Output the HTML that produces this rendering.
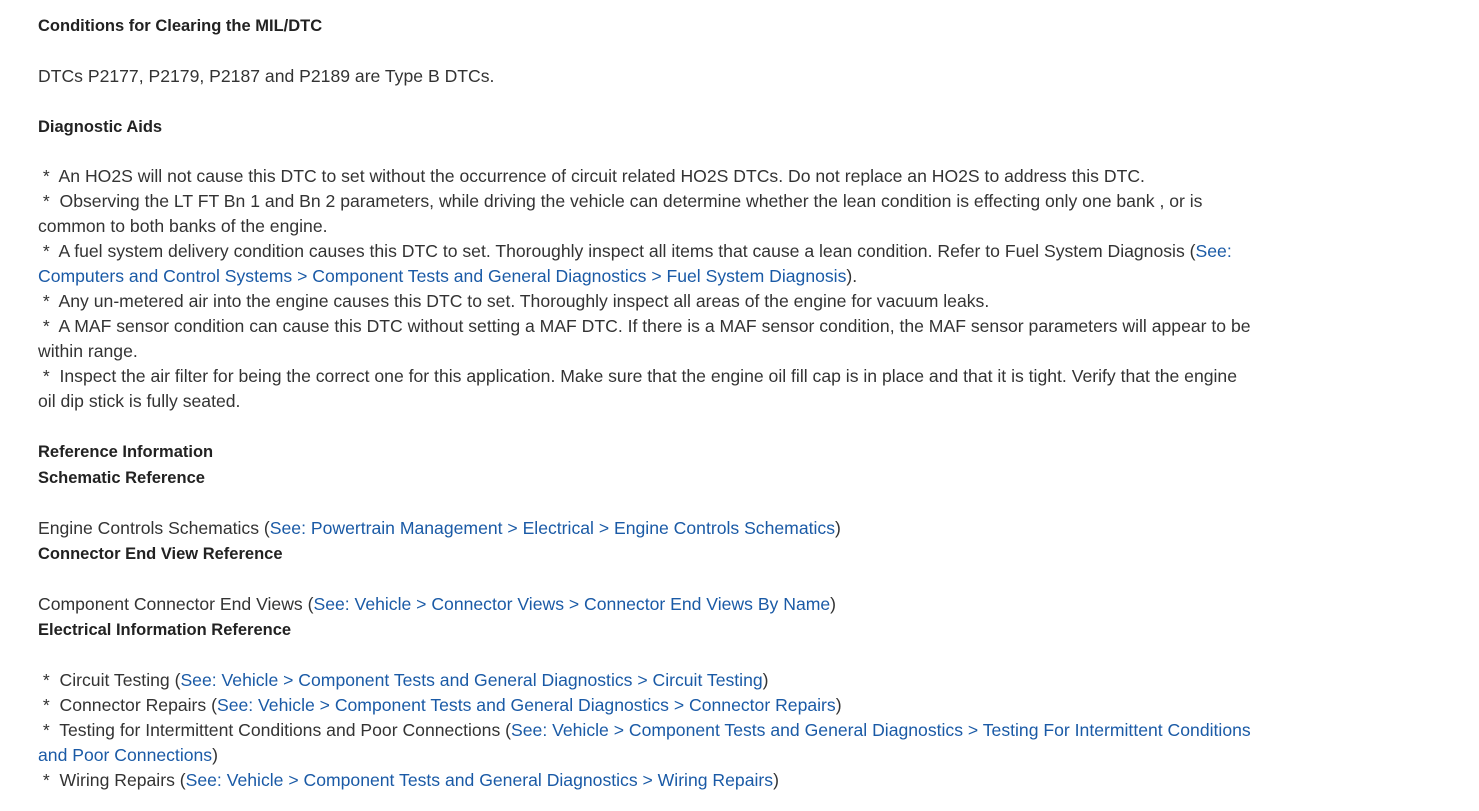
<!DOCTYPE html>
<html><head><meta charset="utf-8"><style>
body{margin:0;background:#fff;width:1479px;height:811px;overflow:hidden;font-family:"Liberation Sans",Arial,sans-serif;font-size:17.6px;color:#333}
.l{position:absolute;left:38px;white-space:nowrap;line-height:20px}
b{font-weight:bold;color:#222;font-size:16.5px}
a{color:#1a5aa6;text-decoration:none}
</style></head><body>
<div class="l" style="top:15px"><b>Conditions for Clearing the MIL/DTC</b></div>
<div class="l" style="top:66px">DTCs P2177, P2179, P2187 and P2189 are Type B DTCs.</div>
<div class="l" style="top:116px"><b>Diagnostic Aids</b></div>
<div class="l" style="top:166px">&nbsp;*&nbsp; An HO2S will not cause this DTC to set without the occurrence of circuit related HO2S DTCs. Do not replace an HO2S to address this DTC.</div>
<div class="l" style="top:191px">&nbsp;*&nbsp; Observing the LT FT Bn 1 and Bn 2 parameters, while driving the vehicle can determine whether the lean condition is effecting only one bank , or is</div>
<div class="l" style="top:216px">common to both banks of the engine.</div>
<div class="l" style="top:241px">&nbsp;*&nbsp; A fuel system delivery condition causes this DTC to set. Thoroughly inspect all items that cause a lean condition. Refer to Fuel System Diagnosis (<a>See:</a></div>
<div class="l" style="top:266px"><a>Computers and Control Systems &gt; Component Tests and General Diagnostics &gt; Fuel System Diagnosis</a>).</div>
<div class="l" style="top:291px">&nbsp;*&nbsp; Any un-metered air into the engine causes this DTC to set. Thoroughly inspect all areas of the engine for vacuum leaks.</div>
<div class="l" style="top:316px">&nbsp;*&nbsp; A MAF sensor condition can cause this DTC without setting a MAF DTC. If there is a MAF sensor condition, the MAF sensor parameters will appear to be</div>
<div class="l" style="top:341px">within range.</div>
<div class="l" style="top:366px">&nbsp;*&nbsp; Inspect the air filter for being the correct one for this application. Make sure that the engine oil fill cap is in place and that it is tight. Verify that the engine</div>
<div class="l" style="top:391px">oil dip stick is fully seated.</div>
<div class="l" style="top:441px"><b>Reference Information</b></div>
<div class="l" style="top:467px"><b>Schematic Reference</b></div>
<div class="l" style="top:518px">Engine Controls Schematics (<a>See: Powertrain Management &gt; Electrical &gt; Engine Controls Schematics</a>)</div>
<div class="l" style="top:543px"><b>Connector End View Reference</b></div>
<div class="l" style="top:594px">Component Connector End Views (<a>See: Vehicle &gt; Connector Views &gt; Connector End Views By Name</a>)</div>
<div class="l" style="top:619px"><b>Electrical Information Reference</b></div>
<div class="l" style="top:670px">&nbsp;*&nbsp; Circuit Testing (<a>See: Vehicle &gt; Component Tests and General Diagnostics &gt; Circuit Testing</a>)</div>
<div class="l" style="top:695px">&nbsp;*&nbsp; Connector Repairs (<a>See: Vehicle &gt; Component Tests and General Diagnostics &gt; Connector Repairs</a>)</div>
<div class="l" style="top:720px">&nbsp;*&nbsp; Testing for Intermittent Conditions and Poor Connections (<a>See: Vehicle &gt; Component Tests and General Diagnostics &gt; Testing For Intermittent Conditions</a></div>
<div class="l" style="top:745px"><a>and Poor Connections</a>)</div>
<div class="l" style="top:770px">&nbsp;*&nbsp; Wiring Repairs (<a>See: Vehicle &gt; Component Tests and General Diagnostics &gt; Wiring Repairs</a>)</div>
</body></html>
